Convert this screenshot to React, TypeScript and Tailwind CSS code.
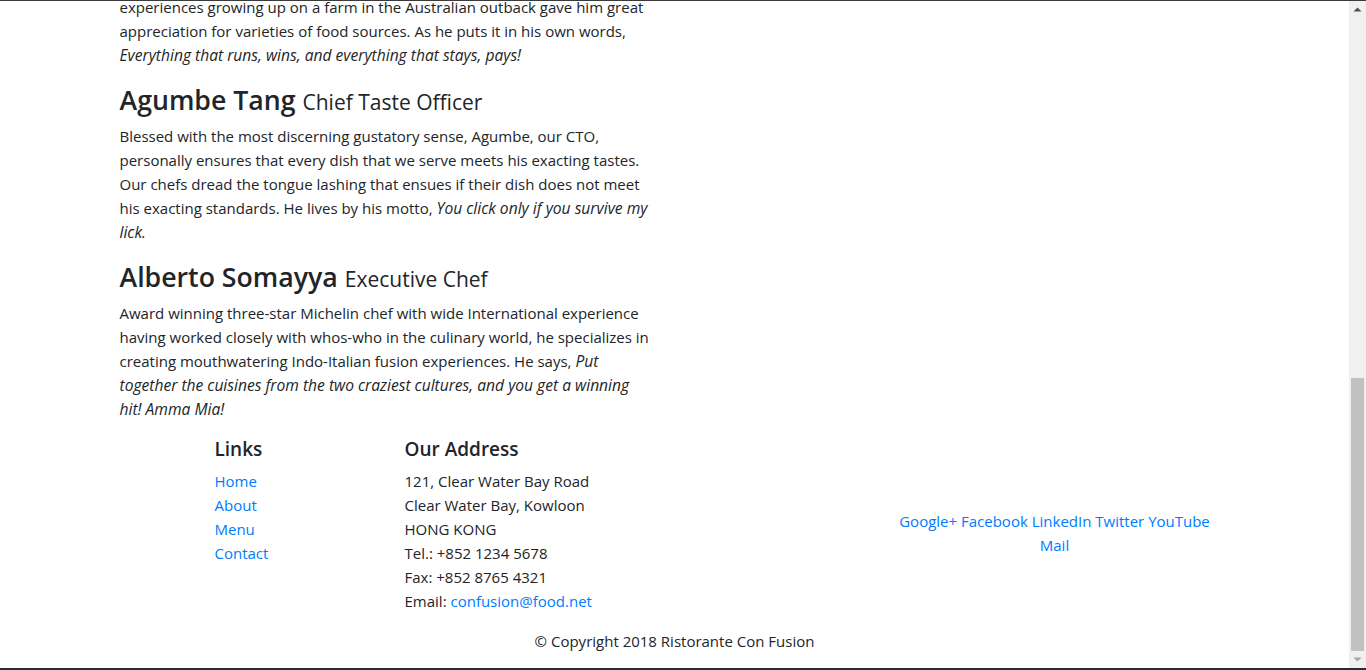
import React from "react";

const font = { fontFamily: '"Open Sans", "Noto Sans", sans-serif' };

function Scrollbar() {
  return (
    <div className="w-[17px] bg-[#f0f0f0] flex flex-col">
      <div className="h-[17px] flex items-center justify-center">
        <svg width="9" height="5" viewBox="0 0 9 5">
          <polygon points="0.5,4.5 4.5,0.5 8.5,4.5" fill="#505050" />
        </svg>
      </div>
      <div className="flex-1" />
      <div className="h-[273px] mx-[2px] bg-[#c1c1c1]" />
      <div className="h-[17px] flex items-center justify-center">
        <svg width="9" height="5" viewBox="0 0 9 5">
          <polygon points="0.5,0.5 4.5,4.5 8.5,0.5" fill="#a3a3a3" />
        </svg>
      </div>
    </div>
  );
}

function I({ children }: { children: React.ReactNode }) {
  return <em className="text-[15.6px]">{children}</em>;
}

export default function App() {
  return (
    <div className="w-[1366px] h-[670px] overflow-hidden flex flex-col bg-white border-t border-t-[#3a3a3a] border-b-2 border-b-[#2b2b2b]" style={font}>
      <div className="flex flex-1 min-h-0">
        <main className="flex-1 overflow-hidden text-[#212529] text-[15px] leading-[24px]">
          <div className="w-[1140px] mx-auto px-[15px]">
            <div className="w-[540px] whitespace-nowrap">
              <p className="mt-[-6px] mb-4">
                experiences growing up on a farm in the Australian outback gave him great<br />
                appreciation for varieties of food sources. As he puts it in his own words,<br />
                <I>Everything that runs, wins, and everything that stays, pays!</I>
              </p>
              <h3 className="text-[26.7px] leading-[33px] font-semibold mb-[5px]">
                Agumbe Tang <span className="text-[21px] font-normal">Chief Taste Officer</span>
              </h3>
              <p className="mb-4">
                Blessed with the most discerning gustatory sense, Agumbe, our CTO,<br />
                personally ensures that every dish that we serve meets his exacting tastes.<br />
                Our chefs dread the tongue lashing that ensues if their dish does not meet<br />
                his exacting standards. He lives by his motto, <I>You click only if you survive my<br />
                lick.</I>
              </p>
              <h3 className="text-[26.7px] leading-[33px] font-semibold mb-[5px]">
                Alberto Somayya <span className="text-[21px] font-normal">Executive Chef</span>
              </h3>
              <p className="mb-4">
                Award winning three-star Michelin chef with wide International experience<br />
                having worked closely with whos-who in the culinary world, he specializes in<br />
                creating mouthwatering Indo-Italian fusion experiences. He says, <I>Put<br />
                together the cuisines from the two craziest cultures, and you get a winning<br />
                hit! Amma Mia!</I>
              </p>
            </div>
          </div>
          <footer className="w-[1140px] mx-auto">
            <div className="flex">
              <div className="ml-[95px] w-[190px] px-[15px]">
                <h5 className="text-[19px] leading-[24px] font-semibold mb-2">Links</h5>
                <ul className="flex flex-col">
                  <li><a className="text-[#007bff]" href="#">Home</a></li>
                  <li><a className="text-[#007bff]" href="#">About</a></li>
                  <li><a className="text-[#007bff]" href="#">Menu</a></li>
                  <li><a className="text-[#007bff]" href="#">Contact</a></li>
                </ul>
              </div>
              <div className="w-[475px] px-[15px]">
                <h5 className="text-[19px] leading-[24px] font-semibold mb-2">Our Address</h5>
                <address className="not-italic mb-4">
                  121, Clear Water Bay Road<br />
                  Clear Water Bay, Kowloon<br />
                  HONG KONG<br />
                  Tel.: +852 1234 5678<br />
                  Fax: +852 8765 4321<br />
                  Email: <a className="text-[#007bff]" href="#">confusion@food.net</a>
                </address>
              </div>
              <div className="w-[380px] px-[15px] self-center text-center">
                <div className="text-[#007bff]">
                  <a href="#">Google+</a> <a href="#">Facebook</a> <a href="#">LinkedIn</a> <a href="#">Twitter</a> <a href="#">YouTube</a><br />
                  <a href="#">Mail</a>
                </div>
              </div>
            </div>
            <div className="flex justify-center">
              <p>© Copyright 2018 Ristorante Con Fusion</p>
            </div>
          </footer>
        </main>
        <Scrollbar />
      </div>
    </div>
  );
}
